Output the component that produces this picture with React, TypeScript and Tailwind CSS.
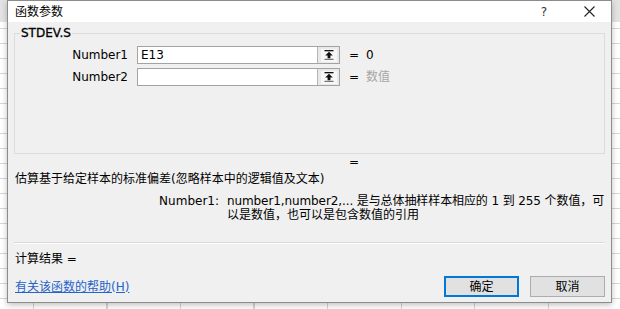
import React from "react";

const FONT = { fontFamily: '"DejaVu Sans", "Noto Sans CJK SC", sans-serif' };

function RefIcon() {
  return (
    <svg width="10" height="10" viewBox="0 0 10 10" fill="#111">
      <rect x="0.5" y="0" width="9" height="1.3" />
      <path d="M5 1.8 L1.2 5.6 H3.6 V8.2 H6.4 V5.6 H8.8 Z" />
      <rect x="0.5" y="8.8" width="9" height="1" fill="#555" />
    </svg>
  );
}

function ArgRow({ label, value, result, muted }: { label: string; value: string; result: string; muted?: boolean }) {
  return (
    <div className="flex h-[18px] items-center">
      <span className="w-[113px] text-right leading-4">{label}</span>
      <div className="ml-[9px] flex h-[18px] w-[203px] border border-[#a3a3a3] bg-white">
        <span className="flex-1 pl-[3px] leading-4">{value}</span>
        <span className="flex w-[22px] items-center justify-center border-l border-[#b5b5b5] bg-[#e9e9e9]">
          <span className="flex h-[13px] w-[16px] items-center justify-center bg-[#f7f7f7]">
            <RefIcon />
          </span>
        </span>
      </div>
      <span className="ml-[9px] leading-4">=</span>
      <span className={muted ? "ml-[7px] leading-4 text-[#a6a6a6]" : "ml-[7px] leading-4"}>{result}</span>
    </div>
  );
}

export default function App() {
  return (
    <div
      className="relative h-[309px] w-[620px] overflow-hidden bg-white bg-[image:repeating-linear-gradient(to_bottom,transparent_0px,transparent_13px,#d6d6d6_13px,#d6d6d6_14px,transparent_14px,transparent_15px),repeating-linear-gradient(to_right,transparent_0px,transparent_33px,#d6d6d6_33px,#d6d6d6_34px,transparent_34px,transparent_73.5px)] text-[12px] text-black"
      style={FONT}
    >
      {/* column header strip behind the dialog */}
      <div className="h-[22px] bg-[#e3e3e3]" />

      {/* dialog */}
      <div className="absolute left-[7px] top-0 flex h-[303px] w-[605px] flex-col border border-[#8c8c8c] bg-[#f0f0f0] shadow-[0_2px_6px_rgba(0,0,0,0.25)]">
        {/* title bar */}
        <div className="flex h-[21px] shrink-0 items-center bg-white pl-[7px]">
          <span className="leading-4">函数参数</span>
          <span className="ml-auto mr-[37px] text-[12px] leading-4 text-[#333]">?</span>
          <svg className="mr-[16px]" width="11" height="11" viewBox="0 0 11 11" stroke="#222" strokeWidth="1.1">
            <path d="M0.5 0.5 L10.5 10.5 M10.5 0.5 L0.5 10.5" />
          </svg>
        </div>

        {/* body */}
        <div className="flex flex-1 flex-col px-[6px] pb-[5px]">
          <div className="relative mt-[11px] flex h-[121px] flex-col gap-[4px] border border-[#dcdcdc] pt-[12px]">
            <span className="absolute -top-[9px] left-[5px] bg-[#f0f0f0] px-px leading-4 [-webkit-text-stroke:0.3px_#000]">STDEV.S</span>
            <ArgRow label="Number1" value="E13" result="0" />
            <ArgRow label="Number2" value="" result="数值" muted />
          </div>

          <div className="h-[17px] pl-[335px] leading-[17px]">=</div>
          <div className="h-4 pl-px leading-4">估算基于给定样本的标准偏差(忽略样本中的逻辑值及文本)</div>

          <div className="mt-[7px] flex">
            <span className="w-[205px] shrink-0 text-right leading-[14px]">Number1:</span>
            <div className="ml-[8px] flex flex-col whitespace-nowrap leading-[14px]">
              <span className="tracking-[-0.1px]">number1,number2,... 是与总体抽样样本相应的 1 到 255 个数值，可</span>
              <span>以是数值，也可以是包含数值的引用</span>
            </div>
          </div>

          <div className="mt-[20px] h-[2px] border-b border-t border-b-white border-t-[#d9d9d9]" />

          <div className="mt-[7px] h-4 pl-px leading-4">计算结果 =</div>

          <div className="mt-[9px] flex h-[21px] items-center">
            <a className="pl-px leading-4 text-[#2563c9] underline">有关该函数的帮助(H)</a>
            <button className="ml-auto h-[21px] w-[75px] border border-[#0078d7] bg-[#e1e1e1] leading-4 shadow-[inset_0_0_0_1px_#0078d7]">
              确定
            </button>
            <button className="ml-[11px] h-[21px] w-[75px] border border-[#adadad] bg-[#e1e1e1] leading-4">
              取消
            </button>
          </div>
        </div>
      </div>
    </div>
  );
}
